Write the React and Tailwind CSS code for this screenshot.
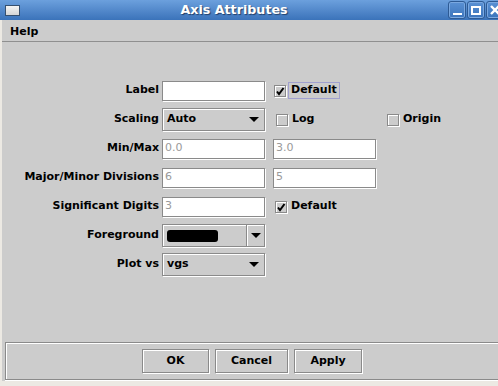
import React from "react";

// flush 3D border like the old Metal look: dark line outside, white line inside/right-bottom
const flush = "border border-[#8a8a8a] shadow-[inset_1px_1px_0_#fff,1px_1px_0_#fff]";
const font = "font-['DejaVu_Sans',sans-serif]";

function TitleBar() {
  return (
    <div className="h-[20px] flex items-center bg-gradient-to-b from-[#6ca0dd] to-[#3b73ba] relative">
      <div className="ml-[5px] w-[15px] h-[11px] border border-[#36506f] bg-gradient-to-b from-[#f4f4f4] to-[#d6d6d6]" />
      <div className="flex-1 text-center text-white font-bold text-[12.7px] [text-shadow:1px_1px_1px_#23406a]">
        Axis Attributes
      </div>
      <div className="flex gap-[1px] mr-[-6px]">
        <WinButton>
          <div className="w-[9px] h-[2px] bg-white mt-[8px]" />
        </WinButton>
        <WinButton>
          <div className="w-[10px] h-[9px] border-2 border-white" />
        </WinButton>
        <WinButton>
          <svg width="10" height="10" viewBox="0 0 10 10">
            <path d="M1 1 L9 9 M9 1 L1 9" stroke="#fff" strokeWidth="2.4" />
          </svg>
        </WinButton>
      </div>
    </div>
  );
}

function WinButton({ children }) {
  return (
    <div className="w-[18px] h-[18px] rounded-[3px] border border-[#2d5a94] shadow-[inset_0_0_0_1px_#7aa8e0] bg-gradient-to-b from-[#5a91d4] to-[#3c74bb] flex items-center justify-center">
      {children}
    </div>
  );
}

function CheckBox({ checked }) {
  return (
    <div className={`w-[12px] h-[12px] bg-[#cccccc] ${flush} flex items-center justify-center`}>
      {checked && (
        <svg width="10" height="10" viewBox="0 0 10 10">
          <path d="M2 5.5 L4 8 L8.5 2" stroke="#000" strokeWidth="2" fill="none" />
        </svg>
      )}
    </div>
  );
}

function Field({ value }) {
  return (
    <div className={`w-[103px] h-[20px] bg-white ${flush} pl-[2px] flex items-center text-[11px] text-[#9a9a9a]`}>
      {value}
    </div>
  );
}

function Arrow() {
  return (
    <svg width="10" height="5" viewBox="0 0 10 5">
      <path d="M0 0 H10 L5 5 Z" fill="#000" />
    </svg>
  );
}

function Combo({ children }) {
  return (
    <div className={`w-[103px] h-[23px] bg-[#cccccc] ${flush} pl-[4px] pr-[5px] flex items-center justify-between font-bold text-[11px]`}>
      <span>{children}</span>
      <Arrow />
    </div>
  );
}

function Row({ label, children }) {
  return (
    <div className="h-[29px] flex items-center">
      <div className="w-[157px] text-right font-bold text-[11px] whitespace-nowrap">{label}</div>
      <div className="ml-[3px] flex items-center">{children}</div>
    </div>
  );
}

export default function App() {
  return (
    <div className={`w-[498px] h-[386px] overflow-hidden flex flex-col bg-[#ece9e3] text-black ${font}`}>
      <TitleBar />
      <div className="flex-1 flex flex-col pl-[2px]">
        <div className="h-[22px] bg-[#cccccc] border-b border-[#8f8f8f] flex items-center pt-[4px] pl-[8px] font-bold text-[11px]">
          Help
        </div>
        <div className="h-[300px] bg-[#cccccc] pt-[34px]">
          <Row label="Label">
            <Field value="" />
            <div className="ml-[9px]">
              <CheckBox checked />
            </div>
            <div className="ml-[2px] px-[2px] h-[17px] flex items-center border border-[#a0a0cf] font-bold text-[11px]">
              Default
            </div>
          </Row>
          <Row label="Scaling">
            <Combo>Auto</Combo>
            <div className="ml-[11px] w-[111px] flex items-center gap-[4px] font-bold text-[11px]">
              <CheckBox />
              <span>Log</span>
            </div>
            <div className="flex items-center gap-[4px] font-bold text-[11px]">
              <CheckBox />
              <span>Origin</span>
            </div>
          </Row>
          <Row label="Min/Max">
            <Field value="0.0" />
            <div className="ml-[8px]">
              <Field value="3.0" />
            </div>
          </Row>
          <Row label="Major/Minor Divisions">
            <Field value="6" />
            <div className="ml-[8px]">
              <Field value="5" />
            </div>
          </Row>
          <Row label="Significant Digits">
            <Field value="3" />
            <div className="ml-[10px] flex items-center gap-[4px] font-bold text-[11px]">
              <CheckBox checked />
              <span>Default</span>
            </div>
          </Row>
          <Row label="Foreground">
            <div className={`w-[103px] h-[23px] bg-[#cccccc] ${flush} flex`}>
              <div className="flex-1 flex items-center pl-[4px]">
                <div className="w-[51px] h-[12px] rounded-[3px] bg-black" />
              </div>
              <div className="w-[18px] border-l border-[#8a8a8a] shadow-[inset_1px_0_0_#fff] flex items-center justify-center">
                <Arrow />
              </div>
            </div>
          </Row>
          <Row label="Plot vs">
            <Combo>vgs</Combo>
          </Row>
        </div>
        <div className="h-[39px] bg-[#cccccc] pl-[3px]">
          <div className="h-[38px] border-t border-l border-b border-[#8a8a8a] shadow-[inset_1px_1px_0_#fff,0_1px_0_#fff] flex items-center justify-center gap-[6px]">
            <Btn w="w-[67px]">OK</Btn>
            <Btn w="w-[73px]">Cancel</Btn>
            <Btn w="w-[68px]">Apply</Btn>
          </div>
        </div>
        <div className="flex-1 bg-[#ece9e3]" />
      </div>
    </div>
  );
}

function Btn({ w, children }) {
  return (
    <div className={`${w} h-[24px] bg-[#cccccc] ${flush} flex items-center justify-center font-bold text-[11px]`}>
      {children}
    </div>
  );
}
